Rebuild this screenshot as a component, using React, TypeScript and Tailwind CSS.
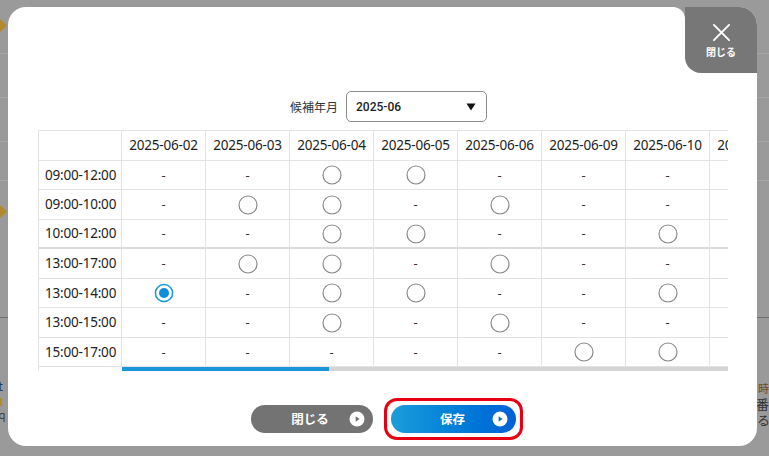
import React from "react";

const dates = [
  "2025-06-02","2025-06-03","2025-06-04","2025-06-05","2025-06-06","2025-06-09","2025-06-10",
  "2025-06-11","2025-06-12","2025-06-13","2025-06-16","2025-06-17","2025-06-18","2025-06-19",
  "2025-06-20","2025-06-23","2025-06-24","2025-06-25","2025-06-26","2025-06-27","2025-06-30",
];
const times = ["09:00-12:00","09:00-10:00","10:00-12:00","13:00-17:00","13:00-14:00","13:00-15:00","15:00-17:00"];
const grid = ["--OO---", "-OO-O--", "--OO--O", "-OO-O--", "S-OO--O", "--O-O--", "-----OO"];
const rowH = ["h-[29px]", "h-[30px]", "h-[29px]", "h-[30px]", "h-[29px]", "h-[30px]", "h-[29px]"];

function Cell({ v }: { v: string }) {
  if (v === "O")
    return (
      <svg width="20" height="20" viewBox="0 0 20 20">
        <circle cx="10" cy="10" r="9" fill="white" stroke="#8a8a8a" strokeWidth="1.2" />
      </svg>
    );
  if (v === "S")
    return (
      <svg width="20" height="20" viewBox="0 0 20 20">
        <circle cx="10" cy="10" r="8.6" fill="white" stroke="#1a96d8" strokeWidth="1.5" />
        <circle cx="10" cy="10" r="5" fill="#0e8fd8" />
      </svg>
    );
  return <span className="text-[13px] leading-none text-[#333]">-</span>;
}

function PlayIcon({ color }: { color: string }) {
  return (
    <svg width="16" height="16" viewBox="0 0 16 16">
      <circle cx="8" cy="8" r="7.5" fill="white" />
      <path d="M6.6 5.2 L10.6 8 L6.6 10.8 Z" fill={color} />
    </svg>
  );
}

export default function App() {
  return (
    <div className="relative w-[769px] h-[456px] overflow-hidden bg-[#9a9a9a] font-['Noto_Sans','Noto_Sans_CJK_JP',sans-serif]">
      {/* background page behind overlay */}
      <div className="absolute inset-x-0 top-[53px] h-px bg-[#a6a6a6]" />
      <div className="absolute inset-x-0 top-[97px] h-px bg-[#a6a6a6]" />
      <div className="absolute inset-x-0 top-[141px] h-px bg-[#a6a6a6]" />
      <div className="absolute inset-x-0 top-[180px] h-px bg-[#a6a6a6]" />
      <div className="absolute inset-x-0 top-[317px] h-px bg-[#6f6f6f]" />
      <div className="absolute left-[-4px] top-[21px] w-[9px] h-[9px] rotate-45 bg-[#b08a2c]" />
      <div className="absolute left-[-4px] top-[207px] w-[9px] h-[9px] rotate-45 bg-[#b08a2c]" />
      <div className="absolute left-[-2px] top-[379px] text-[13px] leading-none text-[#1d3a6a] font-['Noto_Sans_CJK_JP',sans-serif]">t</div>
      <div className="absolute left-0 top-[398px] w-[2px] h-[8px] bg-[#b08a2c]" />
      <div className="absolute left-[-3px] top-[410px] text-[10px] leading-none text-[#333] font-['Noto_Sans_CJK_JP',sans-serif]">ｑ</div>
      <div className="absolute left-[758px] top-[383px] text-[11px] leading-none text-[#6a4a1a] font-['Noto_Sans_CJK_JP',sans-serif]">時</div>
      <div className="absolute left-[756px] top-[397px] text-[13px] leading-none text-[#333] font-['Noto_Sans_CJK_JP',sans-serif]">番</div>
      <div className="absolute left-[757px] top-[413px] text-[13px] leading-none text-[#333] font-['Noto_Sans_CJK_JP',sans-serif]">る</div>

      {/* modal */}
      <div className="absolute left-[8px] top-[7px] w-[749px] h-[439px] bg-white rounded-[18px] flex flex-col">
        {/* close tab */}
        <div className="absolute right-[72px] top-0 w-[14px] h-[14px] bg-[#9a9a9a]">
          <div className="w-full h-full bg-white rounded-tr-[12px]" />
        </div>
        <div className="absolute right-0 top-0 w-[72px] h-[66px] bg-[#777777] rounded-tr-[18px] rounded-bl-[16px] flex flex-col items-center pt-[16px]">
          <svg width="19" height="19" viewBox="0 0 20 20">
            <path d="M2 2 L18 18 M18 2 L2 18" stroke="white" strokeWidth="2" strokeLinecap="round" />
          </svg>
          <span className="mt-[5px] text-[10px] leading-none font-bold text-white font-['Noto_Sans_CJK_JP',sans-serif]">閉じる</span>
        </div>

        <div className="pt-[84px] pl-[282px] flex items-center gap-[8px]">
          <span className="text-[12px] text-[#333] font-['Noto_Sans_CJK_JP',sans-serif]">候補年月</span>
          <div className="w-[141px] h-[31px] border border-[#8c8c8c] rounded-[5px] flex items-center justify-between pl-[9px] pr-[10px]">
            <span className="text-[12px] font-medium text-[#222] font-['Roboto',sans-serif]">2025-06</span>
            <svg width="10" height="8" viewBox="0 0 10 8">
              <path d="M0.5 0.5 L9.5 0.5 L5 7.5 Z" fill="#111" />
            </svg>
          </div>
        </div>

        {/* table */}
        <div className="mt-[8px] ml-[30px] w-[690px] flex">
          <div className="w-[84px] shrink-0 flex flex-col border-l border-t border-[#e3e3e3]">
            <div className="h-[30px] border-r border-b border-[#e3e3e3]" />
            {times.map((t, i) => (
              <div
                key={t}
                className={`${rowH[i]} border-r border-[#e3e3e3] flex items-center pl-[6px] whitespace-nowrap text-[13.5px] tracking-[-0.2px] text-[#222] ${i === 2 ? "border-b-2 border-b-[#dcdcdc]" : "border-b"}`}
              >
                {t}
              </div>
            ))}
          </div>
          <div className="flex-1 min-w-0 flex flex-col">
            <div className="overflow-hidden">
              <div className="w-[1764px] flex flex-col border-t border-[#e3e3e3]">
                <div className="h-[30px] flex">
                  {dates.map((d) => (
                    <div key={d} className="w-[84px] shrink-0 border-r border-b border-[#e3e3e3] flex items-center justify-center whitespace-nowrap text-[13.5px] tracking-[-0.2px] text-[#222]">
                      {d}
                    </div>
                  ))}
                </div>
                {times.map((t, i) => (
                  <div key={t} className="flex">
                    {dates.map((d, j) => (
                      <div
                        key={d}
                        className={`${rowH[i]} w-[84px] shrink-0 border-r border-[#e3e3e3] flex items-center justify-center ${i === 2 ? "border-b-2 border-b-[#dcdcdc]" : "border-b"}`}
                      >
                        <Cell v={j < 7 ? grid[i][j] : "-"} />
                      </div>
                    ))}
                  </div>
                ))}
              </div>
            </div>
            <div className="h-[4px] bg-[#d4d4d4] flex">
              <div className="w-[207px] h-full bg-[#1a96d8]" />
            </div>
          </div>
        </div>

        {/* buttons */}
        <div className="mt-[27px] pl-[243px] flex items-center gap-[11px]">
          <div className="relative w-[122px] h-[28px] rounded-full bg-[#737373] flex items-center justify-center">
            <span className="text-[12.5px] font-bold text-white font-['Noto_Sans_CJK_JP',sans-serif] -ml-[4px]">閉じる</span>
            <div className="absolute right-[8px] top-[6px] flex">
              <PlayIcon color="#737373" />
            </div>
          </div>
          <div className="border-[3px] border-[#e60012] rounded-[13px] p-[4px]">
            <div className="relative w-[125px] h-[28px] rounded-full bg-gradient-to-r from-[#1b9dda] to-[#0060d6] flex items-center justify-center">
              <span className="text-[12.5px] font-bold text-white font-['Noto_Sans_CJK_JP',sans-serif] -ml-[2px]">保存</span>
              <div className="absolute right-[8px] top-[6px] flex">
                <PlayIcon color="#0a6fd8" />
              </div>
            </div>
          </div>
        </div>
      </div>
    </div>
  );
}
